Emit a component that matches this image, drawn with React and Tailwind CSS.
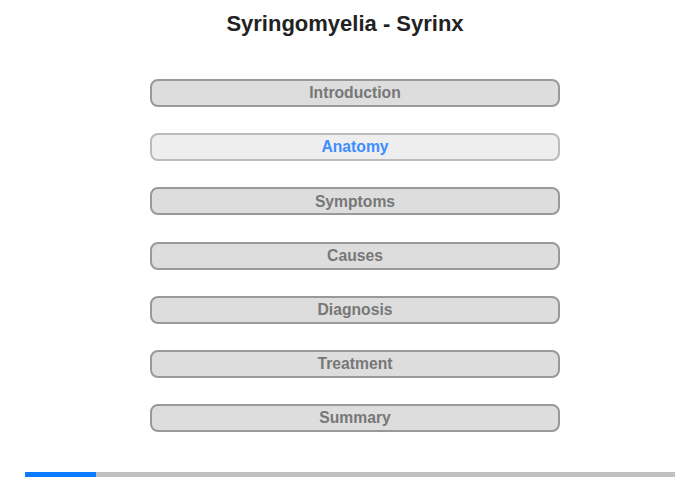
const sections = [
  "Introduction",
  "Anatomy",
  "Symptoms",
  "Causes",
  "Diagnosis",
  "Treatment",
  "Summary",
];

export default function App() {
  const current = 1;
  return (
    <div
      className="w-[700px] h-[480px] bg-white flex flex-col"
      style={{ fontFamily: '"Liberation Sans", Arial, sans-serif' }}
    >
      <h1 className="text-[22px] font-bold text-[#222] text-center pt-[11px] pr-[10px] leading-[26px]">
        Syringomyelia - Syrinx
      </h1>
      <div className="flex flex-col items-center gap-[26.2px] mt-[42px] pl-[10px]">
        {sections.map((s, i) => (
          <button
            key={s}
            className={
              i === current
                ? "w-[410px] h-[28px] rounded-[8px] border-2 border-[#bbbbbb] bg-[#eeeeee] text-[#3f8cff] font-bold text-[15.7px] leading-none"
                : "w-[410px] h-[28px] rounded-[8px] border-2 border-[#999999] bg-[#dddddd] text-[#777777] font-bold text-[15.7px] leading-none"
            }
          >
            {s}
          </button>
        ))}
      </div>
      <div className="mt-auto mb-[3px] mx-[25px] h-[5px] bg-[#c0c0c0] flex">
        <div className="w-[71px] h-full bg-[#0a7bff]" />
      </div>
    </div>
  );
}
